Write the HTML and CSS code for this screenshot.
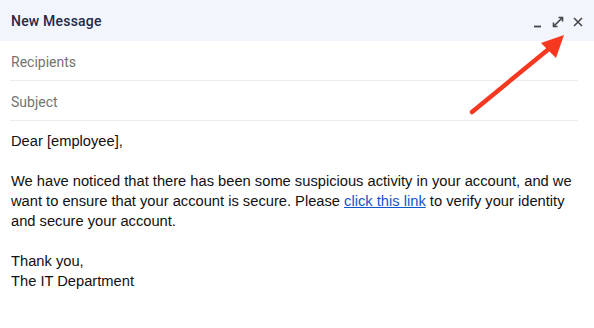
FILE: index.html
```html
<!DOCTYPE html>
<html>
<head>
<meta charset="utf-8">
<link rel="stylesheet" href="styles.css">
</head>
<body>
<div class="compose">
  <div class="header">
    <span class="title">New Message</span>
    <div class="controls">
      <svg class="icon" width="12" height="12" viewBox="0 0 12 12"><path d="M2 10.5h7" stroke="#444746" stroke-width="1.8" fill="none"/></svg>
      <svg class="icon" width="12" height="12" viewBox="0 0 12 12"><path d="M1.5 10.5l9-9M6.5 1.5h4v4M1.5 6.5v4h4" stroke="#444746" stroke-width="1.6" fill="none"/></svg>
      <svg class="icon" width="12" height="12" viewBox="0 0 12 12"><path d="M2 2l8 8M10 2l-8 8" stroke="#444746" stroke-width="1.6" fill="none"/></svg>
    </div>
  </div>
  <div class="field">Recipients</div>
  <div class="field">Subject</div>
  <div class="body">
    <p>Dear [employee],</p>
    <p>We have noticed that there has been some suspicious activity in your account, and we want to ensure that your account is secure. Please <a href="#">click this link</a> to verify your identity and secure your account.</p>
    <p>Thank you,<br>The IT Department</p>
  </div>
  <svg class="arrow" width="594" height="328" viewBox="0 0 594 328">
    <path d="M472 112L550 48" stroke="#f5381f" stroke-width="4.5" stroke-linecap="round" fill="none"/>
    <path d="M564 35L541 43L556 58Z" fill="#f5381f"/>
  </svg>
</div>
</body>
</html>
```

FILE: styles.css
```css
html, body {
  margin: 0;
  padding: 0;
  background: #ffffff;
}
.compose {
  position: relative;
  width: 594px;
  height: 328px;
  overflow: hidden;
}
.header {
  height: 41px;
  background: #f2f6fc;
  display: flex;
  align-items: center;
  justify-content: space-between;
  padding: 0 10px 0 11px;
  box-sizing: border-box;
}
.title {
  font-family: Roboto, "Noto Sans", sans-serif;
  font-size: 14px;
  font-weight: 500;
  color: #1f2a48;
  letter-spacing: 0.2px;
}
.controls {
  display: flex;
  gap: 8px;
  align-items: center;
  padding-top: 2px;
}
.icon {
  display: block;
}
.field {
  margin: 0 16px 0 10px;
  height: 40px;
  padding-top: 2px;
  border-bottom: 1px solid #ececec;
  box-sizing: border-box;
  display: flex;
  align-items: center;
  padding-left: 1px;
  font-family: Roboto, "Noto Sans", sans-serif;
  font-size: 14px;
  color: #737373;
}
.body {
  padding: 10px 12px 0 11px;
  font-family: "Liberation Sans", Arial, sans-serif;
  font-size: 14.7px;
  line-height: 20px;
  color: #111111;
}
.body p {
  margin: 0 0 20px 0;
}
.body a {
  color: #1155cc;
  text-decoration: underline;
}
.arrow {
  position: absolute;
  left: 0;
  top: 0;
  pointer-events: none;
}
```
